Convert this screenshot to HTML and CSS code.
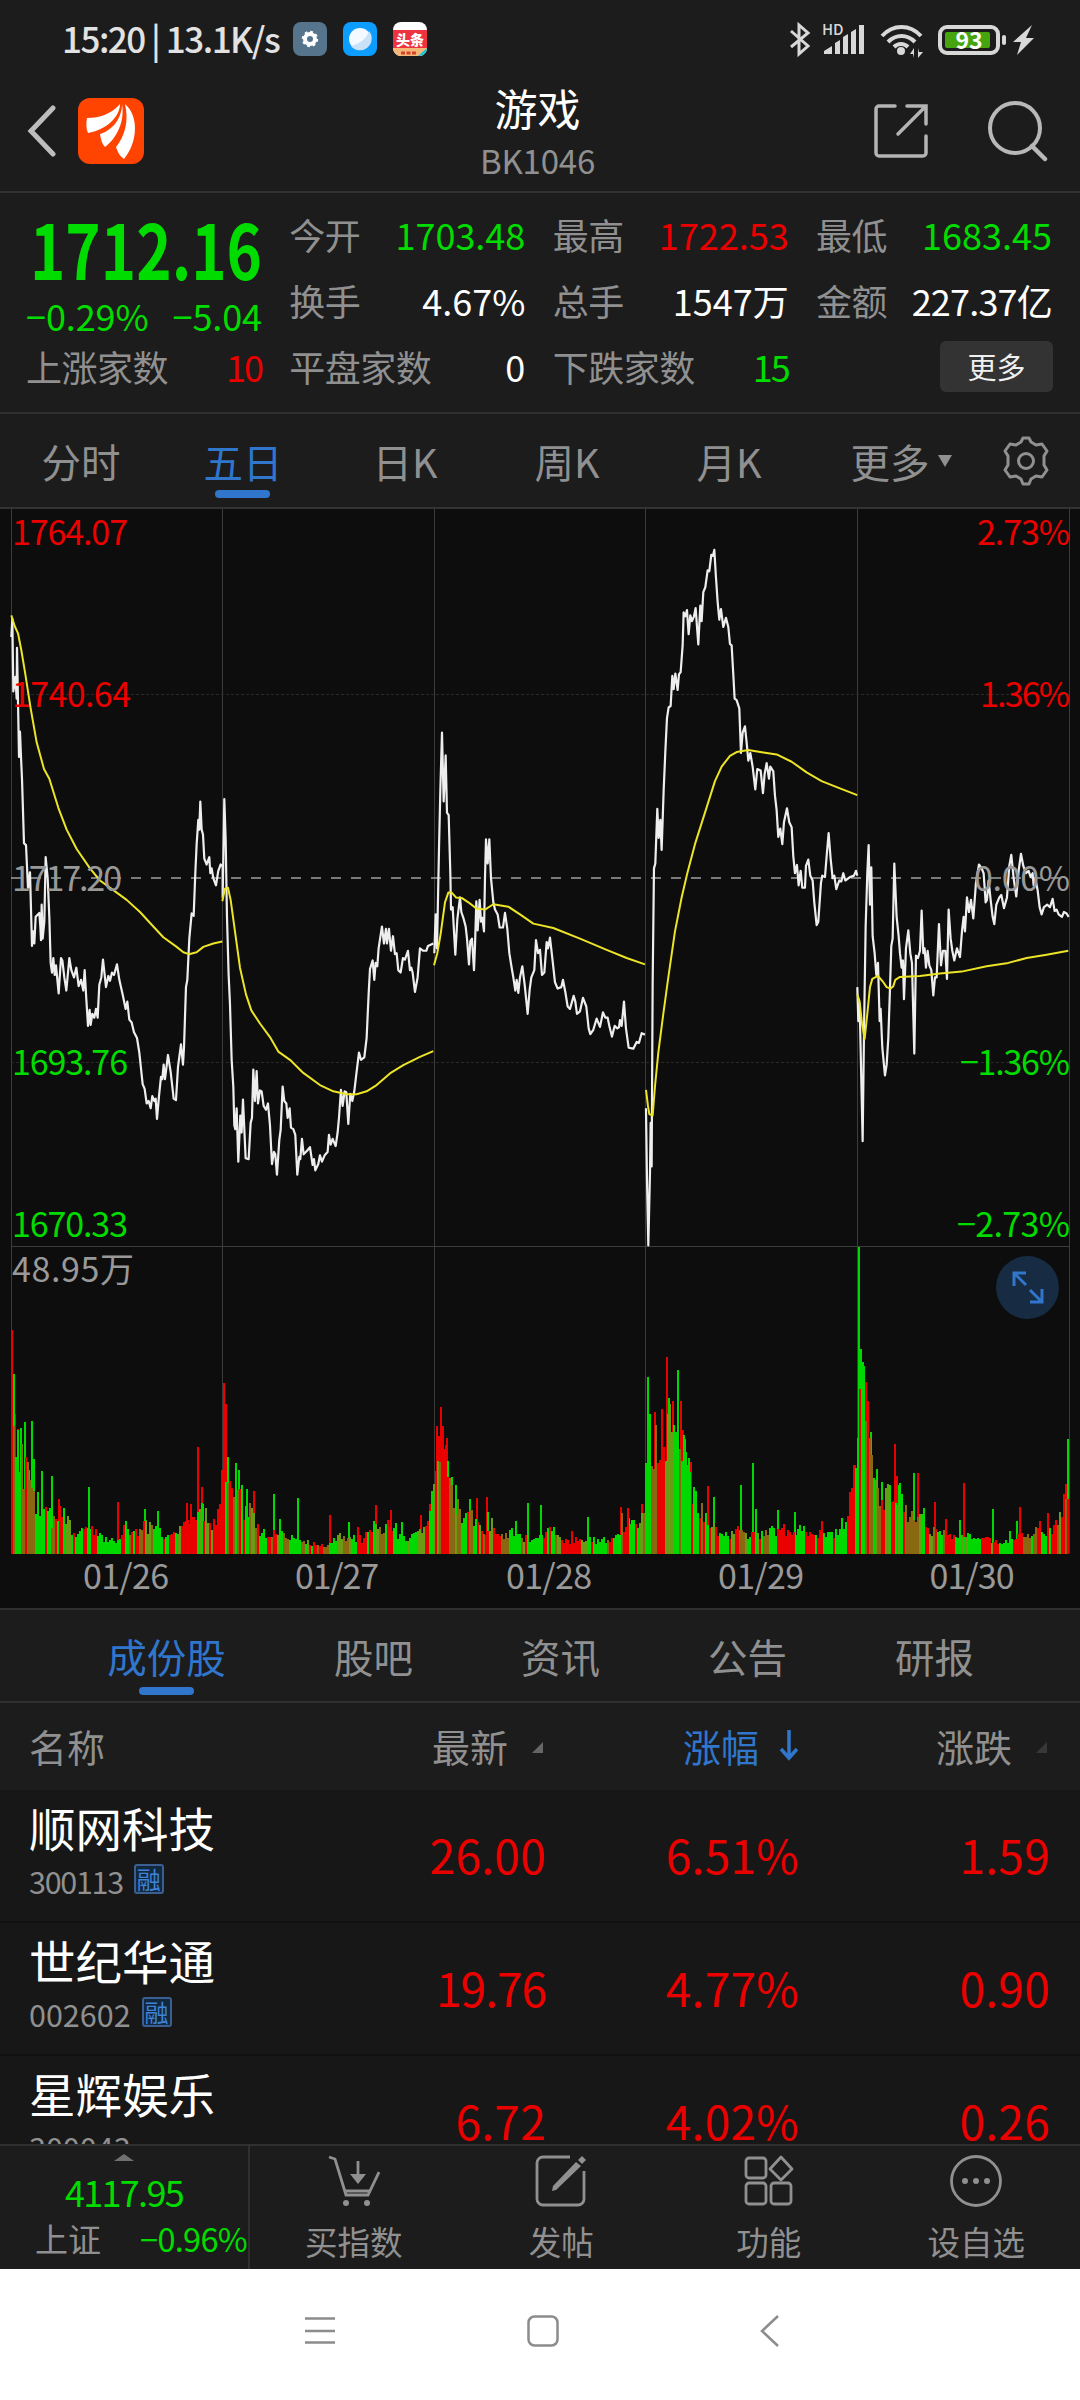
FILE: index.html
```html
<!DOCTYPE html>
<html lang="zh-CN">
<head>
    <meta charset="utf-8">
    <title>游戏 BK1046</title>
    <link rel="stylesheet" href="styles.css">
</head>
<body>
    <div class="statusbar">
        <span class="clock">15:20 | 13.1K/s</span>
        <svg class="app" viewBox="0 0 34 34"><rect width="34" height="34" rx="8" fill="#56758c"/><circle cx="17" cy="17" r="5" fill="none" stroke="#fff" stroke-width="4"/><circle cx="17" cy="17" r="7.2" fill="none" stroke="#fff" stroke-width="2" stroke-dasharray="2.8 2.85"/></svg>
        <svg class="app" viewBox="0 0 34 34"><rect width="34" height="34" rx="8" fill="#0c9dff"/><circle cx="17" cy="17" r="11" fill="#f4faff"/><path d="M8 24C17 22 24 16 26 9a11 11 0 0 1-18 15z" fill="#c9e2f8"/></svg>
        <svg class="app" viewBox="0 0 34 34"><rect width="34" height="34" rx="8" fill="#fff"/><path d="M0 8h34v18H0z" fill="#ee3340"/><path d="M0 26h34a8 8 0 0 1-8 8H8a8 8 0 0 1-8-8z" fill="#f4b978"/><path d="M25 34l9-8a8 8 0 0 1-8 8z" fill="#18c5d8"/><text x="17" y="23" class="toutiao">头条</text><path d="M8 31h15" stroke="#d8412a" stroke-width="3" stroke-dasharray="4 1.5"/></svg>
        <svg class="sys" viewBox="786 16 252 44">
            <path d="M791 30l17 15-9 8V24l9 8-17 14" fill="none" stroke="#d8d8d8" stroke-width="3"/>
            <text x="822" y="34" class="hd">HD</text>
            <g fill="#d8d8d8">
                <path d="M824 53v-3l8-5v8zM835 53V42l5-3v14zM843 53V36l5-3v20zM851 53V31l5-3v25zM859 53V24h5v29z"/>
                <circle cx="901" cy="50" r="4"/>
                <path d="M1032 24l-19 17h8l-4 13 17-17h-8z"/>
                <rect x="1002" y="34" width="4" height="10" rx="2"/>
                <path d="M914 57V47l-4 6h3M918 47v10l5-6h-4z"/>
            </g>
            <path d="M882 35c11-12 28-12 39 0M888 41c8-8 19-8 27 0M894 46c4-4 10-4 14 0" fill="none" stroke="#d8d8d8" stroke-width="4"/>
            <rect x="940" y="26" width="58" height="26" rx="7" fill="none" stroke="#d8d8d8" stroke-width="4"/>
            <rect x="945" y="31" width="45" height="16" rx="2" fill="#46a50f"/>
            <text x="969" y="48" class="batt">93</text>
        </svg>
    </div>

    <header class="titlebar">
        <div class="left">
            <svg class="back" viewBox="0 0 30 52"><path d="M26 3L4 26l22 23" fill="none" stroke="#bdbdbd" stroke-width="5" stroke-linecap="round"/></svg>
            <svg class="logo" viewBox="0 0 66 66"><rect width="66" height="66" rx="12" fill="#ff4300"/><g fill="#fff"><path d="M9 20C22 20 33 16 42 6c0 13-14 26-32 29-2-4-2-10-1-15z"/><path d="M44 6c3 17-5 34-17 43-3-3-4-7-5-13C35 32 44 20 44 6z"/><path d="M47 6c14 12 13 38-1 55-4-3-6-6-8-12 9-11 13-26 9-43z"/></g></svg>
        </div>
        <div class="middle">
            <h1>游戏</h1>
            <p>BK1046</p>
        </div>
        <div class="right">
            <svg class="share" viewBox="0 0 54 54"><path d="M21 2H5a3 3 0 0 0-3 3v44a3 3 0 0 0 3 3h44a3 3 0 0 0 3-3V32M33 2h19v18M51 3L24 30" fill="none" stroke="#b4b4b4" stroke-width="3.5" stroke-linecap="round"/></svg>
            <svg class="search" viewBox="0 0 60 62"><circle cx="27" cy="28" r="25" fill="none" stroke="#b8b8b8" stroke-width="4"/><path d="M44 46l13 13" stroke="#b8b8b8" stroke-width="4.5" stroke-linecap="round"/></svg>
        </div>
    </header>

    <section class="quote">
        <div class="price green">
            <strong>1712.16</strong>
            <div class="change"><span>−0.29%</span><span>−5.04</span></div>
        </div>
        <div class="cell"><span>今开</span><b class="green">1703.48</b></div>
        <div class="cell"><span>最高</span><b class="red">1722.53</b></div>
        <div class="cell"><span>最低</span><b class="green">1683.45</b></div>
        <div class="cell"><span>换手</span><b>4.67%</b></div>
        <div class="cell"><span>总手</span><b>1547万</b></div>
        <div class="cell tight"><span>金额</span><b>227.37亿</b></div>
        <div class="cell"><span>上涨家数</span><b class="red narrow">10</b></div>
        <div class="cell"><span>平盘家数</span><b>0</b></div>
        <div class="cell"><span>下跌家数</span><b class="green narrow">15</b></div>
        <div class="cell"><button class="more">更多</button></div>
    </section>

    <nav class="periods">
        <a>分时</a>
        <a class="active">五日</a>
        <a>日K</a>
        <a>周K</a>
        <a>月K</a>
        <a>更多<i class="caret"></i></a>
        <svg class="gear" viewBox="0 0 48 50"><path d="M19 6l2-4h6l2 4 5 3 6-1 5 7-3 5v9l3 5-5 7-6-1-5 3-2 5h-6l-2-5-5-3-6 1-5-7 3-5v-9l-3-5 5-7 6 1z" fill="none" stroke="#909090" stroke-width="3" stroke-linejoin="round"/><circle cx="24" cy="25" r="7.5" fill="none" stroke="#909090" stroke-width="3"/></svg>
    </nav>

    <section class="chart">
        <svg viewBox="0 509 1080 1099">
            <g class="grid">
                <path d="M11.5 509V1553M222.5 509V1553M434.5 509V1553M645.5 509V1553M857.5 509V1553M1069.5 509V1553M11 1246.5H1070"/>
                <path class="faint" d="M11 694.5H1070M11 1062.5H1070"/>
            </g>
            <path class="zero" d="M11 878H1070"/>
            <g id="volume" shape-rendering="crispEdges"></g>
            <g class="price-line">
                <g transform="translate(0 500) scale(.3333 .4847)">
                    <polyline points="34,283 37,245 40,395 46,365 50,410 51,305 54,415 57,530 60,478 63,530 66,575 72,708 78,712 84,800 90,768 96,920 100,890 103,915 107,860 118,852 121,880 123,908 125,835 128,905 133,870 137,737 143,780 148,860 152,955 156,975 160,945 164,980 168,960 176,1018 183,945 187,950 193,985 199,1012 208,945 214,970 222,985 229,965 236,1003 243,990 250,1012 254,970 259,1030 264,1085 269,1052 272,1083 277,1060 283,1068 288,1050 293,1068 298,1000 304,985 309,948 318,1005 325,982 330,992 336,975 342,980 351,958 358,990 368,1020 377,1050 382,1035 388,1072 395,1078 402,1098 411,1110 418,1140 428,1205 434,1215 440,1245 446,1240 452,1255 457,1230 463,1240 467,1235 471,1277 477,1230 483,1190 487,1195 491,1165 495,1195 504,1145 512,1180 521,1235 528,1238 534,1170 543,1123 549,1165 552,1130 558,1005 562,990 568,905 575,853 581,858 586,770 590,710 595,660 598,680 601,622 605,680 609,690 613,740 620,752 628,737 631,770 635,760 640,780 648,795 655,765 662,752 667,755"/>
                    <polyline points="668,755 668,820 673,617 677,700 681,860 686,980 690,1040 695,1155 700,1210 703,1290 706,1298 710,1255 715,1365 721,1270 725,1305 729,1237 737,1358 746,1360 752,1285 756,1275 760,1175 765,1240 770,1178 774,1245 780,1218 785,1220 791,1250 798,1258 804,1245 810,1290 816,1370 822,1345 826,1350 831,1392 838,1320 842,1300 848,1210 853,1240 859,1245 863,1275 869,1255 873,1295 880,1298 886,1310 892,1392 898,1355 901,1360 906,1318 911,1350 922,1342 930,1335 938,1372 942,1360 946,1383 955,1370 960,1352 966,1365 974,1352 983,1345 987,1310 992,1330 998,1318 1007,1333 1013,1305 1017,1275 1023,1217 1028,1250 1034,1220 1039,1222 1045,1287 1051,1225 1057,1240 1063,1220 1069,1185 1077,1140 1083,1155 1093,1150 1100,1110 1106,1020 1110,968 1118,950 1123,990 1127,955 1132,962 1136,925 1146,880 1152,915 1158,885 1161,915 1167,885 1173,930 1179,900 1185,937 1190,935 1195,970 1202,975 1209,945 1215,948 1224,930 1230,970 1234,965 1238,975 1245,1015 1253,985 1260,925 1270,930 1279,930 1284,920 1300,915"/>
                    <polyline class="avg" points="34,238 44,260 54,275 64,310 75,355 92,430 110,500 132,555 148,575 175,635 200,680 230,720 270,760 300,785 340,805 380,825 420,850 460,880 490,902 530,922 550,933 567,937 590,933 610,922 640,915 667,911"/>
                    <polyline class="avg" points="667,828 675,802 684,800 692,825 705,890 720,965 738,1020 754,1053 780,1080 810,1108 835,1138 870,1155 910,1182 960,1207 1000,1220 1040,1226 1070,1226 1100,1220 1130,1207 1170,1183 1210,1166 1260,1149 1300,1137"/>
                </g>
                <g transform="translate(420 500) scale(.3333 .4847)">
                    <polyline points="43,935 47,855 51,925 57,720 61,600 66,480 71,622 77,527 81,645 86,650 91,770 93,845 98,840 102,890 106,938 112,865 120,820 124,850 130,862 137,880 141,905 147,958 151,910 156,905 162,970 165,920 169,828 173,888 179,825 183,870 187,862 192,890 195,780 198,700 203,750 208,700 213,780 220,830 225,845 233,855 239,882 249,882 255,852 262,885 268,935 275,965 280,985 286,1012 290,990 295,1017 300,985 307,962 314,1000 323,1060 329,1010 334,985 343,970 348,908 354,935 360,928 366,980 373,975 380,912 384,925 390,903 397,945 405,995 413,1008 424,1005 429,990 436,1015 443,1045 450,1050 461,1023 466,1035 471,1060 480,1055 489,1027 499,1045 506,1090 511,1102 520,1093 530,1070 540,1087 549,1057 556,1068 563,1068 569,1088 576,1107 584,1085 592,1090 597,1088 600,1073 605,1085 612,1035 618,1090 626,1130 640,1132 650,1118 657,1120 665,1100 675,1103"/>
                    <polyline points="678,1255 681,1400 685,1538 690,1390 692,1285 695,1375 698,1000 702,760 706,750 712,637 716,697 721,660 725,722 731,600 736,520 741,450 746,428 752,425 757,363 761,390 766,358 773,392 777,360 782,355 788,300 791,232 796,240 801,227 806,277 811,238 816,250 822,240 827,223 835,298 841,218 845,250 850,190 856,180 863,145 868,147 874,113 879,115 883,103 888,160 893,210 898,247 903,225 910,262 918,243 925,262 930,297 935,300 940,360 944,410 950,413 958,430 963,522 968,480 975,467 980,500 985,538 991,522 998,550 1006,597 1012,555 1022,558 1029,605 1034,565 1040,543 1047,575 1051,550 1060,560 1065,610 1070,640 1075,695 1081,678 1087,710 1092,665 1101,636 1108,665 1115,675 1120,735 1125,770 1131,753 1136,795 1142,765 1147,800 1155,800 1158,755 1165,742 1171,775 1178,785 1183,830 1190,877 1195,870 1203,790 1207,775 1215,778 1220,735 1226,687 1232,740 1238,780 1243,775 1249,803 1258,785 1264,787 1270,770 1276,785 1290,778 1302,775 1308,765 1312,775"/>
                    <polyline class="avg" points="42,960 52,935 62,895 75,830 85,810 95,810 108,820 125,821 145,830 170,843 195,845 220,834 265,839 300,855 340,874 400,883 480,905 560,928 620,945 675,958"/>
                    <polyline class="avg" points="678,1217 684,1250 688,1267 698,1270 705,1210 715,1140 730,1060 745,985 765,890 785,820 802,770 825,710 855,645 885,580 905,550 930,528 950,520 985,516 1030,521 1070,525 1115,540 1160,562 1205,580 1260,595 1312,609"/>
                </g>
                <g transform="translate(640 500) scale(.3333 .4847)">
                    <polyline points="652,1005 655,1075 659,1040 668,1323 672,1100 677,880 682,770 686,712 690,835 694,758 698,900 704,935 709,980 714,955 719,1075 722,1050 727,1130 735,1187 740,1165 745,1110 749,1030 754,920 758,905 763,750 770,860 776,900 780,935 785,965 789,950 792,1030 798,925 805,888 811,935 816,955 823,1142 828,940 834,945 840,930 845,847 850,935 854,925 858,965 863,930 868,960 874,970 880,1022 885,985 890,985 897,875 903,960 909,930 916,930 921,988 926,845 932,905 937,930 943,950 951,925 960,943 966,890 971,860 975,890 981,820 987,850 993,825 1000,863 1008,790 1017,752 1025,760 1031,770 1037,830 1041,825 1046,785 1052,825 1058,860 1063,875 1069,835 1078,820 1084,815 1092,842 1101,820 1108,755 1114,732 1121,780 1129,818 1136,765 1143,730 1150,755 1158,770 1166,765 1172,778 1178,770 1181,795 1186,780 1193,805 1199,840 1205,855 1212,840 1222,835 1230,840 1238,823 1244,848 1250,845 1256,855 1266,860 1272,850 1280,853 1286,860"/>
                    <polyline class="avg" points="652,1020 659,1035 666,1080 674,1112 682,1060 690,1005 697,988 714,982 728,993 740,1005 752,1008 760,1003 766,990 780,984 840,982 900,977 965,973 1040,962 1105,955 1160,945 1220,938 1285,930"/>
                </g>
            </g>
            <g class="axis">
                <text class="up" x="12" y="545" textLength="116">1764.07</text>
                <text class="up" x="12" y="707" textLength="119">1740.64</text>
                <text x="12" y="891" textLength="110">1717.20</text>
                <text class="down" x="12" y="1075" textLength="116">1693.76</text>
                <text class="down" x="12" y="1237" textLength="116">1670.33</text>
                <text x="12" y="1282" textLength="122">48.95万</text>
                <g text-anchor="end">
                    <text class="up" x="1070" y="545" textLength="93">2.73%</text>
                    <text class="up" x="1070" y="707" textLength="90">1.36%</text>
                    <text x="1070" y="891" textLength="96">0.00%</text>
                    <text class="down" x="1070" y="1075" textLength="110">−1.36%</text>
                    <text class="down" x="1070" y="1237" textLength="113">−2.73%</text>
                </g>
                <g text-anchor="middle">
                    <text x="126" y="1589" textLength="86">01/26</text>
                    <text x="337" y="1589" textLength="84">01/27</text>
                    <text x="549" y="1589" textLength="86">01/28</text>
                    <text x="761" y="1589" textLength="86">01/29</text>
                    <text x="972" y="1589" textLength="85">01/30</text>
                </g>
            </g>
            <g fill="none" stroke="#2f76cc" stroke-width="3">
                <circle cx="1027.5" cy="1287.5" r="31.5" fill="#172b42" stroke="none"/>
                <path d="M1026 1273h-12v13M1014 1273l12 12M1030 1302h12v-13M1042 1302l-12-12"/>
            </g>
        </svg>
    </section>

    <nav class="sections">
        <a class="active">成份股</a>
        <a>股吧</a>
        <a>资讯</a>
        <a>公告</a>
        <a>研报</a>
    </nav>

    <section class="stocks">
        <div class="row head">
            <span>名称</span>
            <span>最新<i class="corner"></i></span>
            <span class="sorted">涨幅<svg viewBox="0 0 20 32"><path d="M10 1v27M2 20l8 9 8-9" fill="none" stroke="#2f76cc" stroke-width="3.5"/></svg></span>
            <span>涨跌<i class="corner dim"></i></span>
        </div>
        <div class="row">
            <div class="name"><h2>顺网科技</h2><p><span class="narrow">300113</span><em>融</em></p></div>
            <b>26.00</b><b>6.51%</b><b>1.59</b>
        </div>
        <div class="row">
            <div class="name"><h2>世纪华通</h2><p><span>002602</span><em>融</em></p></div>
            <b class="narrow">19.76</b><b>4.77%</b><b>0.90</b>
        </div>
        <div class="row">
            <div class="name"><h2>星辉娱乐</h2><p><span>300043</span></p></div>
            <b>6.72</b><b>4.02%</b><b>0.26</b>
        </div>
    </section>

    <footer class="toolbar">
        <div class="index">
            <i></i>
            <strong>4117.95</strong>
            <div><span>上证</span><b>−0.96%</b></div>
        </div>
        <a>
            <svg viewBox="0 0 52 52"><path d="M1 2l6 2 11 36h22L51 17M17 36h26M30 6v18" fill="none" stroke="#909090" stroke-width="2.8"/><path d="M22 19h16l-8 10z" fill="#909090"/><circle cx="18" cy="48" r="3" fill="#909090"/><circle cx="39" cy="48" r="3" fill="#909090"/></svg>
            买指数
        </a>
        <a>
            <svg viewBox="0 0 52 52"><path d="M35 2H8a6 6 0 0 0-6 6v36a6 6 0 0 0 6 6h35a6 6 0 0 0 6-6V16" fill="none" stroke="#909090" stroke-width="2.8"/><path d="M41 7l5 4-25 24-4 1 1-5zM43 5l4-4 4 4-4 4z" fill="#909090"/></svg>
            发帖
        </a>
        <a>
            <svg viewBox="0 0 52 52"><g fill="none" stroke="#909090" stroke-width="2.8"><rect x="3" y="3" width="20" height="20" rx="3"/><rect x="3" y="28" width="20" height="21" rx="3"/><rect x="28" y="28" width="20" height="21" rx="3"/><path d="M38 2l11 12-11 11-11-11z" stroke-linejoin="round"/></g></svg>
            功能
        </a>
        <a>
            <svg viewBox="0 0 52 52"><circle cx="26" cy="26" r="24.5" fill="none" stroke="#909090" stroke-width="2.8"/><g fill="#909090"><circle cx="15" cy="26" r="3"/><circle cx="26" cy="26" r="3"/><circle cx="37" cy="26" r="3"/></g></svg>
            设自选
        </a>
    </footer>

    <div class="navbar">
        <svg viewBox="0 0 32 32"><path d="M1 3.5h30M1 16h30M1 27.5h30" fill="none" stroke="#8c8c8c" stroke-width="2.5"/></svg>
        <svg viewBox="0 0 32 32"><rect x="1.500" y="1.500" width="29" height="29" rx="6" fill="none" stroke="#8c8c8c" stroke-width="2.5"/></svg>
        <svg viewBox="0 0 32 32"><path d="M28 1L12 16l16 15" fill="none" stroke="#8c8c8c" stroke-width="2.5"/></svg>
    </div>

    <script src="volume.js"></script>
</body>
</html>
```
FILE: styles.css
```css
* {
    margin: 0;
    padding: 0;
    box-sizing: border-box;
}
body {
    width: 1080px;
    height: 2400px;
    overflow: hidden;
    background: #1c1c1c;
    color: #909090;
    font-family: "Noto Sans CJK SC", sans-serif;
    font-size: 36px;
}
svg {
    display: block;
}
i, em {
    font-style: normal;
}
b {
    font-weight: normal;
}
.green {
    color: #00dc00 !important;
}
.red {
    color: #eb0000 !important;
}

/* status bar */
.statusbar {
    display: flex;
    align-items: center;
    height: 78px;
    padding-left: 62px;
}
.clock {
    width: 231px;
    height: 52px;
    color: #e2e2e2;
    font-size: 35px;
    font-weight: 500;
    line-height: 50px;
    letter-spacing: -1.5px;
    white-space: nowrap;
}
.app {
    width: 34px;
    height: 34px;
    margin-right: 16px;
}
.toutiao {
    font-size: 14px;
    font-weight: 900;
    fill: #fff;
    text-anchor: middle;
}
.sys {
    width: 252px;
    height: 44px;
    margin-left: 343px;
}
.hd {
    font-size: 15px;
    font-weight: 500;
    fill: #d8d8d8;
}
.batt {
    font-size: 23px;
    font-weight: 700;
    fill: #fff;
    text-anchor: middle;
}

/* title */
.titlebar {
    display: flex;
    justify-content: space-between;
    height: 115px;
    padding: 0 32px 0 27px;
    border-bottom: 2px solid #303030;
}
.left, .right {
    display: flex;
    width: 174px;
    height: 106px;
    align-items: center;
}
.back {
    width: 30px;
    height: 52px;
    margin-right: 21px;
}
.logo {
    width: 66px;
    height: 66px;
}
.middle h1 {
    margin-top: 1px;
    color: #fff;
    font-size: 43px;
    font-weight: 400;
    line-height: 56px;
    text-align: center;
}
.middle p {
    font-size: 33px;
    line-height: 50px;
    letter-spacing: -.2px;
}
.share {
    width: 54px;
    height: 54px;
    margin-right: 60px;
}
.search {
    width: 60px;
    height: 62px;
    flex: none;
}

/* quote */
.quote {
    display: grid;
    grid-template-columns: repeat(4, 236px);
    grid-template-rows: repeat(3, 66px);
    justify-content: space-between;
    height: 221px;
    padding: 8px 28px 0 26px;
    border-bottom: 2px solid #303030;
}
.price {
    grid-row: span 2;
    text-align: right;
}
.price strong {
    display: block;
    width: 302px;
    height: 81px;
    margin-left: -66px;
    font-size: 76px;
    font-weight: 700;
    line-height: 93px;
    transform: scaleX(.79);
    transform-origin: right;
}
.change {
    display: flex;
    justify-content: space-between;
    line-height: 66px;
    letter-spacing: -.1px;
}
.cell {
    display: flex;
    justify-content: space-between;
    align-items: center;
    line-height: 66px;
    white-space: nowrap;
}
.cell span {
    letter-spacing: -.5px;
}
.cell b {
    color: #fff;
}
.tight b {
    letter-spacing: -.8px;
}
.cell .narrow {
    letter-spacing: -2px;
}
.more {
    width: 113px;
    height: 51px;
    margin: 0 -1px 0 auto;
    border: 0;
    border-radius: 6px;
    background: #333;
    color: #f0f0f0;
    font: 29px/50px "Noto Sans CJK SC", sans-serif;
}

/* tabs */
.periods {
    display: flex;
    height: 95px;
    border-bottom: 2px solid #333;
}
.periods a, .sections a {
    position: relative;
    width: 162px;
    font-size: 39.5px;
    line-height: 93px;
    text-align: center;
}
.active {
    color: #2f76cc;
}
.active::after {
    content: "";
    position: absolute;
    left: 50%;
    bottom: 9px;
    width: 55px;
    height: 8px;
    margin-left: -28px;
    border-radius: 4px;
    background: #2f76cc;
}
.periods a:nth-child(6) {
    padding-left: 20px;
    white-space: nowrap;
}
.caret {
    display: inline-block;
    margin: 0 0 11px 8px;
    border: 7px solid transparent;
    border-top: 12px solid #909090;
    border-bottom: 0;
}
.gear {
    width: 48px;
    height: 50px;
    margin: 22px 0 0 30px;
}

/* chart */
.chart {
    height: 1099px;
    background: #0d0d0d;
}
.chart > svg {
    width: 1080px;
    height: 1099px;
}
.grid path {
    stroke: #3c3c3c;
}
.grid .faint {
    stroke: #292929;
    stroke-dasharray: 3 2;
}
.zero {
    stroke: #a0a0a0;
    stroke-width: 1.5;
    stroke-dasharray: 10 10;
}
.price-line polyline {
    fill: none;
    stroke: #eee;
    stroke-width: 2.2;
    stroke-linejoin: round;
    vector-effect: non-scaling-stroke;
}
.price-line .avg {
    stroke: #ece426;
    stroke-width: 2;
}
.axis text {
    fill: #999;
    font-size: 34px;
}
.axis .up {
    fill: #eb0000;
}
.axis .down {
    fill: #00dc00;
}

/* section tabs */
.sections {
    display: flex;
    height: 95px;
    padding-left: 54px;
    border-top: 2px solid #303030;
    border-bottom: 2px solid #303030;
}
.sections a {
    width: 187px;
    line-height: 91px;
}
.sections a:first-child {
    width: 225px;
    margin-right: 1px;
}
.sections .active::after {
    bottom: 6px;
}

/* stock list */
.stocks {
    height: 441px;
    overflow: hidden;
    background: #171717;
}
.row {
    display: grid;
    grid-template-columns: 263px 253px 253px 251px;
    height: 133px;
    padding-left: 30px;
    border-bottom: 2px solid #111;
}
.row > b {
    color: #eb0000;
    font-size: 46px;
    line-height: 128px;
    text-align: right;
    letter-spacing: .3px;
}
.row > .narrow {
    letter-spacing: -1px;
}
.head {
    height: 87px;
    padding-left: 29px;
    grid-template-columns: 264px 253px 253px 251px;
    border: 0;
    background: #1c1c1c;
    font-size: 38px;
    line-height: 84px;
}
.head span {
    display: flex;
    height: 85px;
    align-items: center;
    justify-content: flex-end;
}
.head span:first-child {
    justify-content: flex-start;
}
.corner {
    margin: 4px 3px 0 24px;
    border-left: 11px solid transparent;
    border-bottom: 11px solid #666;
}
.corner.dim {
    border-bottom-color: #383838;
}
.head .sorted {
    color: #2f76cc;
}
.sorted svg {
    width: 20px;
    height: 32px;
    margin: 0 0 2px 20px;
}
.name h2 {
    color: #fff;
    font-size: 46.5px;
    font-weight: 400;
    line-height: 66px;
    margin: 4px 0 0 -1px;
}
.name p {
    display: flex;
    align-items: center;
    margin: 1px 0 0 -1px;
    font-size: 30.5px;
    line-height: 40px;
}
.name .narrow {
    letter-spacing: -1.3px;
}
.name span {
    margin-right: 11px;
}
.name em {
    width: 30px;
    height: 30px;
    margin-bottom: 5px;
    border: 2px solid #3a5f90;
    border-radius: 3px;
    background: #12283f;
    color: #3f83d6;
    font-size: 24px;
    line-height: 25px;
    text-align: center;
}

/* bottom toolbar */
.toolbar {
    display: flex;
    height: 125px;
    border-top: 2px solid #303030;
}
.index {
    width: 250px;
    border-right: 2px solid #303030;
    text-align: center;
}
.index i {
    display: block;
    width: 20px;
    margin: 8px auto 0;
    border: 10px solid transparent;
    border-top: 0;
    border-bottom: 7px solid #707070;
}
.index strong {
    display: block;
    color: #00dc00;
    font-size: 36px;
    font-weight: 400;
    line-height: 60px;
    letter-spacing: -1.7px;
}
.index div {
    display: flex;
    justify-content: space-between;
    padding: 0 1px 0 35px;
    font-size: 33px;
    line-height: 34px;
}
.index b {
    color: #00dc00;
    letter-spacing: -.7px;
    font-size: 32.5px;
}
.toolbar a {
    flex: 1;
    font-size: 32.5px;
    line-height: 46px;
    text-align: center;
}
.toolbar svg {
    width: 52px;
    height: 52px;
    margin: 9px auto 11px;
}

/* system navigation */
.navbar {
    display: flex;
    align-items: center;
    gap: 191px;
    height: 131px;
    padding: 0 0 8px 304px;
    background: #fff;
}
.navbar svg {
    width: 32px;
    height: 32px;
}
```
FILE: volume.js
```js
var RED = "#eb0000", GREEN = "#00d900", MIX = "#8a6812", MIX2 = "#689c14";

// x, typical bar height
var envelope = [[11,130],[16,110],[22,95],[28,80],[34,60],[38,50],[45,46],[52,33],[58,45],[65,38],[72,22],[80,22],[90,24],[98,20],[108,13],[117,14],[122,20],[135,22],[142,28],[150,28],[160,22],[168,18],[178,24],[185,35],[192,35],[197,45],[203,36],[210,28],[215,33],[222,80],[226,96],[232,75],[236,88],[243,48],[250,42],[258,25],[268,22],[280,20],[292,17],[305,14],[318,8],[330,10],[338,20],[350,17],[362,15],[370,28],[382,28],[395,22],[408,17],[418,22],[428,40],[434,75],[437,115],[441,120],[446,88],[452,65],[460,36],[470,38],[480,28],[490,25],[500,18],[512,22],[530,14],[555,26],[562,14],[585,14],[605,15],[615,17],[625,28],[635,30],[643,45],[646,100],[657,115],[664,130],[672,125],[680,120],[684,105],[690,75],[697,50],[706,38],[714,25],[725,20],[735,25],[748,18],[760,20],[775,25],[790,25],[805,25],[820,20],[832,20],[845,35],[855,85],[859,180],[864,155],[870,120],[877,70],[885,58],[893,60],[899,65],[907,38],[920,35],[935,22],[950,18],[963,22],[980,16],[1000,12],[1012,16],[1030,22],[1050,25],[1060,38],[1069,60]];

// single tall bars
var redBars = [[11,224],[14,140],[17,125],[58,55],[117,52],[186,51],[190,50],[197,107],[201,67],[223,171],[225,150],[253,63],[329,39],[375,49],[390,44],[420,39],[429,50],[434,65],[436,128],[438,118],[440,147],[442,128],[446,116],[476,56],[486,57],[620,47],[641,50],[654,142],[661,145],[666,197],[672,153],[680,153],[682,124],[690,92],[707,68],[854,89],[865,172],[867,153],[894,110],[896,78],[917,81],[934,52],[963,71],[1019,47],[1063,60],[1065,70]];
var greenBars = [[13,180],[20,126],[24,132],[31,133],[28,84],[33,95],[37,62],[41,83],[51,78],[88,67],[144,45],[157,43],[202,50],[227,97],[235,91],[238,84],[246,65],[273,60],[297,56],[348,32],[447,93],[451,77],[455,69],[469,55],[487,42],[515,33],[527,51],[540,49],[587,37],[628,36],[647,177],[649,140],[668,156],[677,184],[684,115],[688,96],[693,67],[713,57],[740,69],[752,91],[755,45],[777,44],[794,42],[858,307],[860,205],[862,192],[870,122],[876,85],[881,72],[898,69],[901,60],[913,81],[923,46],[992,45],[1016,33],[1067,115]];

var volume = document.getElementById("volume");
var seed = 26;

function rand() {
    seed = (seed * 16807) % 2147483647;
    return seed / 2147483647;
}

function bar(x, h, color) {
    var rect = document.createElementNS("http://www.w3.org/2000/svg", "rect");
    rect.setAttribute("x", x);
    rect.setAttribute("y", 1554 - h);
    rect.setAttribute("width", 2);
    rect.setAttribute("height", h);
    rect.setAttribute("fill", color);
    volume.appendChild(rect);
}

function typical(x) {
    for (var i = 1; i < envelope.length; i++) {
        if (x <= envelope[i][0]) {
            var a = envelope[i - 1], b = envelope[i];
            return a[1] + (b[1] - a[1]) * (x - a[0]) / (b[0] - a[0]);
        }
    }
    return 60;
}

redBars.forEach(function (b) { bar(b[0], b[1], RED); });
greenBars.forEach(function (b) { bar(b[0], b[1], GREEN); });

var last = RED;
for (var x = 11; x < 1069; x += 2) {
    if (rand() > 0.35) {
        var r = rand();
        last = r < 0.34 ? RED : r < 0.72 ? GREEN : r < 0.89 ? MIX : MIX2;
    }
    var h = typical(x) * (0.7 + rand() * 0.5);
    if (rand() > 0.92 && h < 35) {
        h *= 1.5;
    }
    bar(x, Math.round(h), last);
}
```
